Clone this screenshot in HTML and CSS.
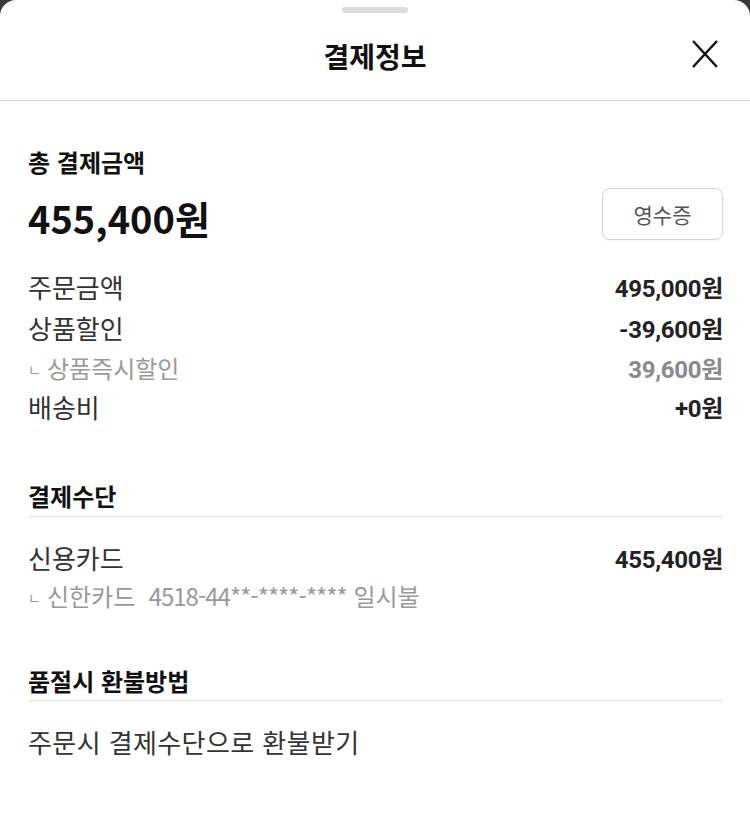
FILE: index.html
```html
<!DOCTYPE html>
<html lang="ko">
<head>
    <meta charset="UTF-8">
    <meta name="viewport" content="width=device-width, initial-scale=1.0">
    <title>결제정보</title>
    <link rel="stylesheet" href="styles.css">
</head>
<body>
    <div class="sheet">
        <!-- Header -->
        <div class="sheet-header">
            <div class="handle"></div>
            <h1 class="title">결제정보</h1>
            <button class="close" aria-label="닫기">
                <svg width="28" height="28" viewBox="0 0 28 28">
                    <path d="M2 1 L26 27 M26 1 L2 27" stroke="#111" stroke-width="2.4" fill="none"/>
                </svg>
            </button>
        </div>

        <!-- Total -->
        <div class="section total">
            <div class="total-label">총 결제금액</div>
            <div class="total-row">
                <div class="total-amount">455,400원</div>
                <button class="receipt">영수증</button>
            </div>
            <div class="rows">
                <div class="row">
                    <span class="label">주문금액</span>
                    <span class="value">495,000원</span>
                </div>
                <div class="row">
                    <span class="label">상품할인</span>
                    <span class="value">-39,600원</span>
                </div>
                <div class="row sub">
                    <span class="label"><span class="mark">ㄴ</span>상품즉시할인</span>
                    <span class="value">39,600원</span>
                </div>
                <div class="row">
                    <span class="label">배송비</span>
                    <span class="value">+0원</span>
                </div>
            </div>
        </div>

        <!-- Payment method -->
        <div class="section">
            <h2 class="section-title">결제수단</h2>
            <div class="row short">
                <span class="label">신용카드</span>
                <span class="value">455,400원</span>
            </div>
            <div class="row sub card">
                <span class="label"><span class="mark">ㄴ</span>신한카드&nbsp;&nbsp;<span class="card-no">4518-44**-****-****</span> 일시불</span>
            </div>
        </div>

        <!-- Refund -->
        <div class="section">
            <h2 class="section-title refund">품절시 환불방법</h2>
            <div class="row">
                <span class="label wide">주문시 결제수단으로 환불받기</span>
            </div>
        </div>
    </div>
</body>
</html>
```

FILE: styles.css
```css
/* Dark backdrop behind the bottom sheet */
body {
    margin: 0;
    background-color: #3a3a3a;
    font-family: "Noto Sans CJK KR", "Noto Sans", sans-serif;
    color: #222;
}

.sheet {
    background-color: #fff;
    border-radius: 16px 16px 0 0;
    min-height: 826px;
}

/* Header */
.sheet-header {
    position: relative;
    height: 100px;
    border-bottom: 1px solid #d8d8d8;
    display: flex;
    align-items: center;
    justify-content: center;
}

.handle {
    position: absolute;
    top: 7px;
    left: 50%;
    width: 66px;
    height: 6px;
    margin-left: -33px;
    border-radius: 3px;
    background-color: #dcdcdc;
}

.title {
    margin: 12px 0 0;
    font-size: 28px;
    font-weight: bold;
    line-height: 34px;
    color: #111;
}

.close {
    position: absolute;
    right: 31px;
    top: 40px;
    padding: 0;
    border: none;
    background: none;
    width: 28px;
    height: 28px;
}

/* Sections */
.section {
    padding: 0 27px 0 28px;
}

.total {
    padding-top: 46px;
}

.total-label {
    font-size: 24px;
    font-weight: bold;
    line-height: 30px;
    color: #111;
}

.total-row {
    margin-top: 11px;
    display: flex;
    justify-content: space-between;
    align-items: flex-start;
}

.total-amount {
    font-size: 38px;
    font-weight: bold;
    line-height: 44px;
    margin-top: 8px;
    color: #111;
}

.receipt {
    width: 121px;
    height: 52px;
    border: 1px solid #d4d4d4;
    border-radius: 8px;
    background: #fff;
    font-family: "Noto Sans CJK KR", sans-serif;
    font-size: 21px;
    color: #555;
    box-shadow: 0 1px 2px rgba(0, 0, 0, 0.05);
}

.rows {
    margin-top: 26px;
}

.row {
    display: flex;
    justify-content: space-between;
    align-items: center;
    height: 41px;
}

.row.short {
    height: 40px;
}

.label {
    font-size: 26px;
    color: #333;
}

.label.wide {
    letter-spacing: 0.4px;
}

.value {
    font-family: Roboto, "Noto Sans CJK KR", sans-serif;
    font-size: 24px;
    font-weight: bold;
    color: #222;
    letter-spacing: -0.3px;
}

.row.sub {
    height: 38px;
}

.row.card {
    height: 36px;
}

.row.sub .label {
    font-size: 24px;
    color: #999;
}

.row.sub .value {
    color: #8a8a8a;
}

.card-no {
    letter-spacing: -1px;
}

.mark {
    font-size: 14px;
    margin-right: 6px;
    vertical-align: 3px;
}

.section-title {
    margin: 54px 0 20px;
    padding-bottom: 5px;
    border-bottom: 1px solid #e2e2e2;
    font-size: 24px;
    font-weight: bold;
    line-height: 30px;
    color: #111;
}

.section-title.refund {
    margin-top: 53px;
    padding-bottom: 4px;
}
```
